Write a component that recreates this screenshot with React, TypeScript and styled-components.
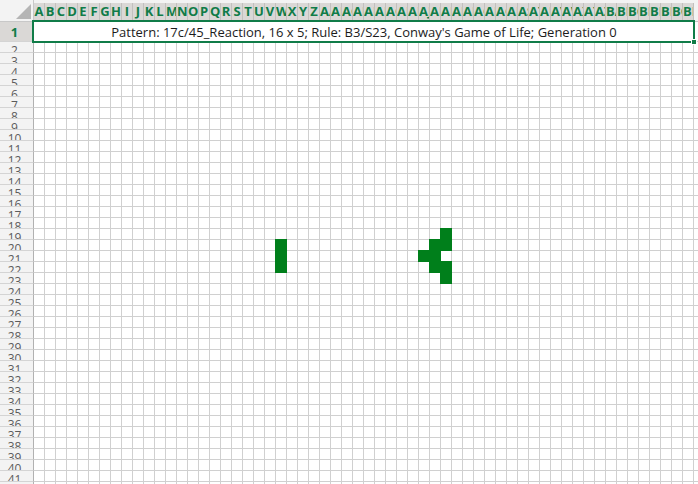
import React from "react";
import styled, { createGlobalStyle } from "styled-components";

const GlobalStyle = createGlobalStyle`
  * { box-sizing: border-box; }
  body { margin: 0; background: #fff; }
`;

const ROWS = 60;
const COLUMNS = 60;
const TITLE =
  "Pattern: 17c/45_Reaction, 16 x 5; Rule: B3/S23, Conway's Game of Life; Generation 0";

const LIVE: Record<number, number[]> = {
  19: [37],
  20: [22, 36, 37],
  21: [22, 35, 36],
  22: [22, 36, 37],
  23: [37],
};

const columnName = (index: number): string =>
  (index >= 26 ? String.fromCharCode(64 + Math.floor(index / 26)) : "") +
  String.fromCharCode(65 + (index % 26));

const columns = Array.from({ length: COLUMNS }, (_, i) => i);
const rows = Array.from({ length: ROWS - 1 }, (_, i) => i + 2);

const Sheet = styled.main`
  height: 100vh;
  overflow: hidden;
  font-family: "Open Sans", "Noto Sans", sans-serif;
`;

const Grid = styled.table`
  width: 100%;
  table-layout: fixed;
  border-collapse: separate;
  border-spacing: 0;

  th, td { padding: 0; }
`;

const HeaderCol = styled.col`
  width: 34px;
`;

const CellCol = styled.col`
  width: 11px;
`;

const Corner = styled.th`
  height: 22px;
  background: #f3f3f3;
  border-right: 1px solid #c8c8c8;
  border-bottom: 1px solid #c8c8c8;
  vertical-align: bottom;
`;

const SelectAll = styled.svg`
  display: block;
  margin: 0 2px 2px auto;
`;

const ColumnHead = styled.th`
  background: #f3f3f3;
  border-bottom: 1px solid #c6c6c6;
  vertical-align: bottom;
`;

const ColumnLabel = styled.div`
  display: flex;
  justify-content: safe center;
  height: 18px;
  overflow: hidden;
  background: #dad8d6;
  border-right: 1px solid #c2c0be;
  color: #107c48;
  font-size: 13px;
  font-weight: 700;
  line-height: 17px;
  white-space: nowrap;
`;

const RowHead = styled.th<{ $selected?: boolean }>`
  height: ${(p) => (p.$selected ? 20 : 11)}px;
  background: ${(p) => (p.$selected ? "#dad8d6" : "#f3f3f3")};
  border-right: 1px solid #b1b1b1;
  border-bottom: 1px solid #d4d4d4;
`;

const RowLabel = styled.div<{ $selected?: boolean }>`
  height: ${(p) => (p.$selected ? 19 : 10)}px;
  padding-right: 4px;
  overflow: hidden;
  color: ${(p) => (p.$selected ? "#107c48" : "#5c5c5c")};
  font-size: ${(p) => (p.$selected ? 13 : 12)}px;
  font-weight: ${(p) => (p.$selected ? 700 : 400)};
  line-height: ${(p) => (p.$selected ? 20 : 17)}px;
  text-align: center;
`;

const TitleCell = styled.td`
  position: relative;
  color: #1c1c1c;
  font-size: 13px;
  line-height: 19px;
  text-align: center;
  white-space: nowrap;
`;

const Selection = styled.span`
  position: absolute;
  inset: -2px -1px -1px -2px;
  border: 2px solid #107c48;
  pointer-events: none;
`;

const FillHandle = styled.span`
  position: absolute;
  right: -4px;
  bottom: -4px;
  width: 6px;
  height: 6px;
  background: #107c48;
  border: 1px solid #fff;
`;

const Cell = styled.td<{ $alive?: boolean }>`
  border-right: 1px solid ${(p) => (p.$alive ? "#007f1b" : "#d0d0d0")};
  border-bottom: 1px solid ${(p) => (p.$alive ? "#007f1b" : "#d0d0d0")};
  background: ${(p) => (p.$alive ? "#007f1b" : "transparent")};
  box-shadow: ${(p) =>
    p.$alive
      ? "-1px 0 #007f1b, 0 -1px #007f1b, -1px -1px #007f1b"
      : "none"};
`;

const Remainder = styled.td`
  border-bottom: 1px solid #d0d0d0;
`;

export default function App() {
  return (
    <Sheet>
      <GlobalStyle />
      <Grid>
        <colgroup>
          <HeaderCol />
          {columns.map((c) => (
            <CellCol key={c} />
          ))}
          <col />
        </colgroup>
        <thead>
          <tr>
            <Corner>
              <SelectAll width="15" height="15" viewBox="0 0 15 15" aria-hidden="true">
                <path d="M15 0V15H0Z" fill="#b5b5b5" />
              </SelectAll>
            </Corner>
            {columns.map((c) => (
              <ColumnHead key={c} scope="col">
                <ColumnLabel>{columnName(c)}</ColumnLabel>
              </ColumnHead>
            ))}
            <ColumnHead />
          </tr>
        </thead>
        <tbody>
          <tr>
            <RowHead scope="row" $selected>
              <RowLabel $selected>1</RowLabel>
            </RowHead>
            <TitleCell colSpan={COLUMNS}>
              {TITLE}
              <Selection>
                <FillHandle />
              </Selection>
            </TitleCell>
            <Remainder />
          </tr>
          {rows.map((r) => (
            <tr key={r}>
              <RowHead scope="row">
                <RowLabel>{r}</RowLabel>
              </RowHead>
              {columns.map((c) => (
                <Cell key={c} $alive={LIVE[r]?.includes(c)} />
              ))}
              <Remainder />
            </tr>
          ))}
        </tbody>
      </Grid>
    </Sheet>
  );
}
